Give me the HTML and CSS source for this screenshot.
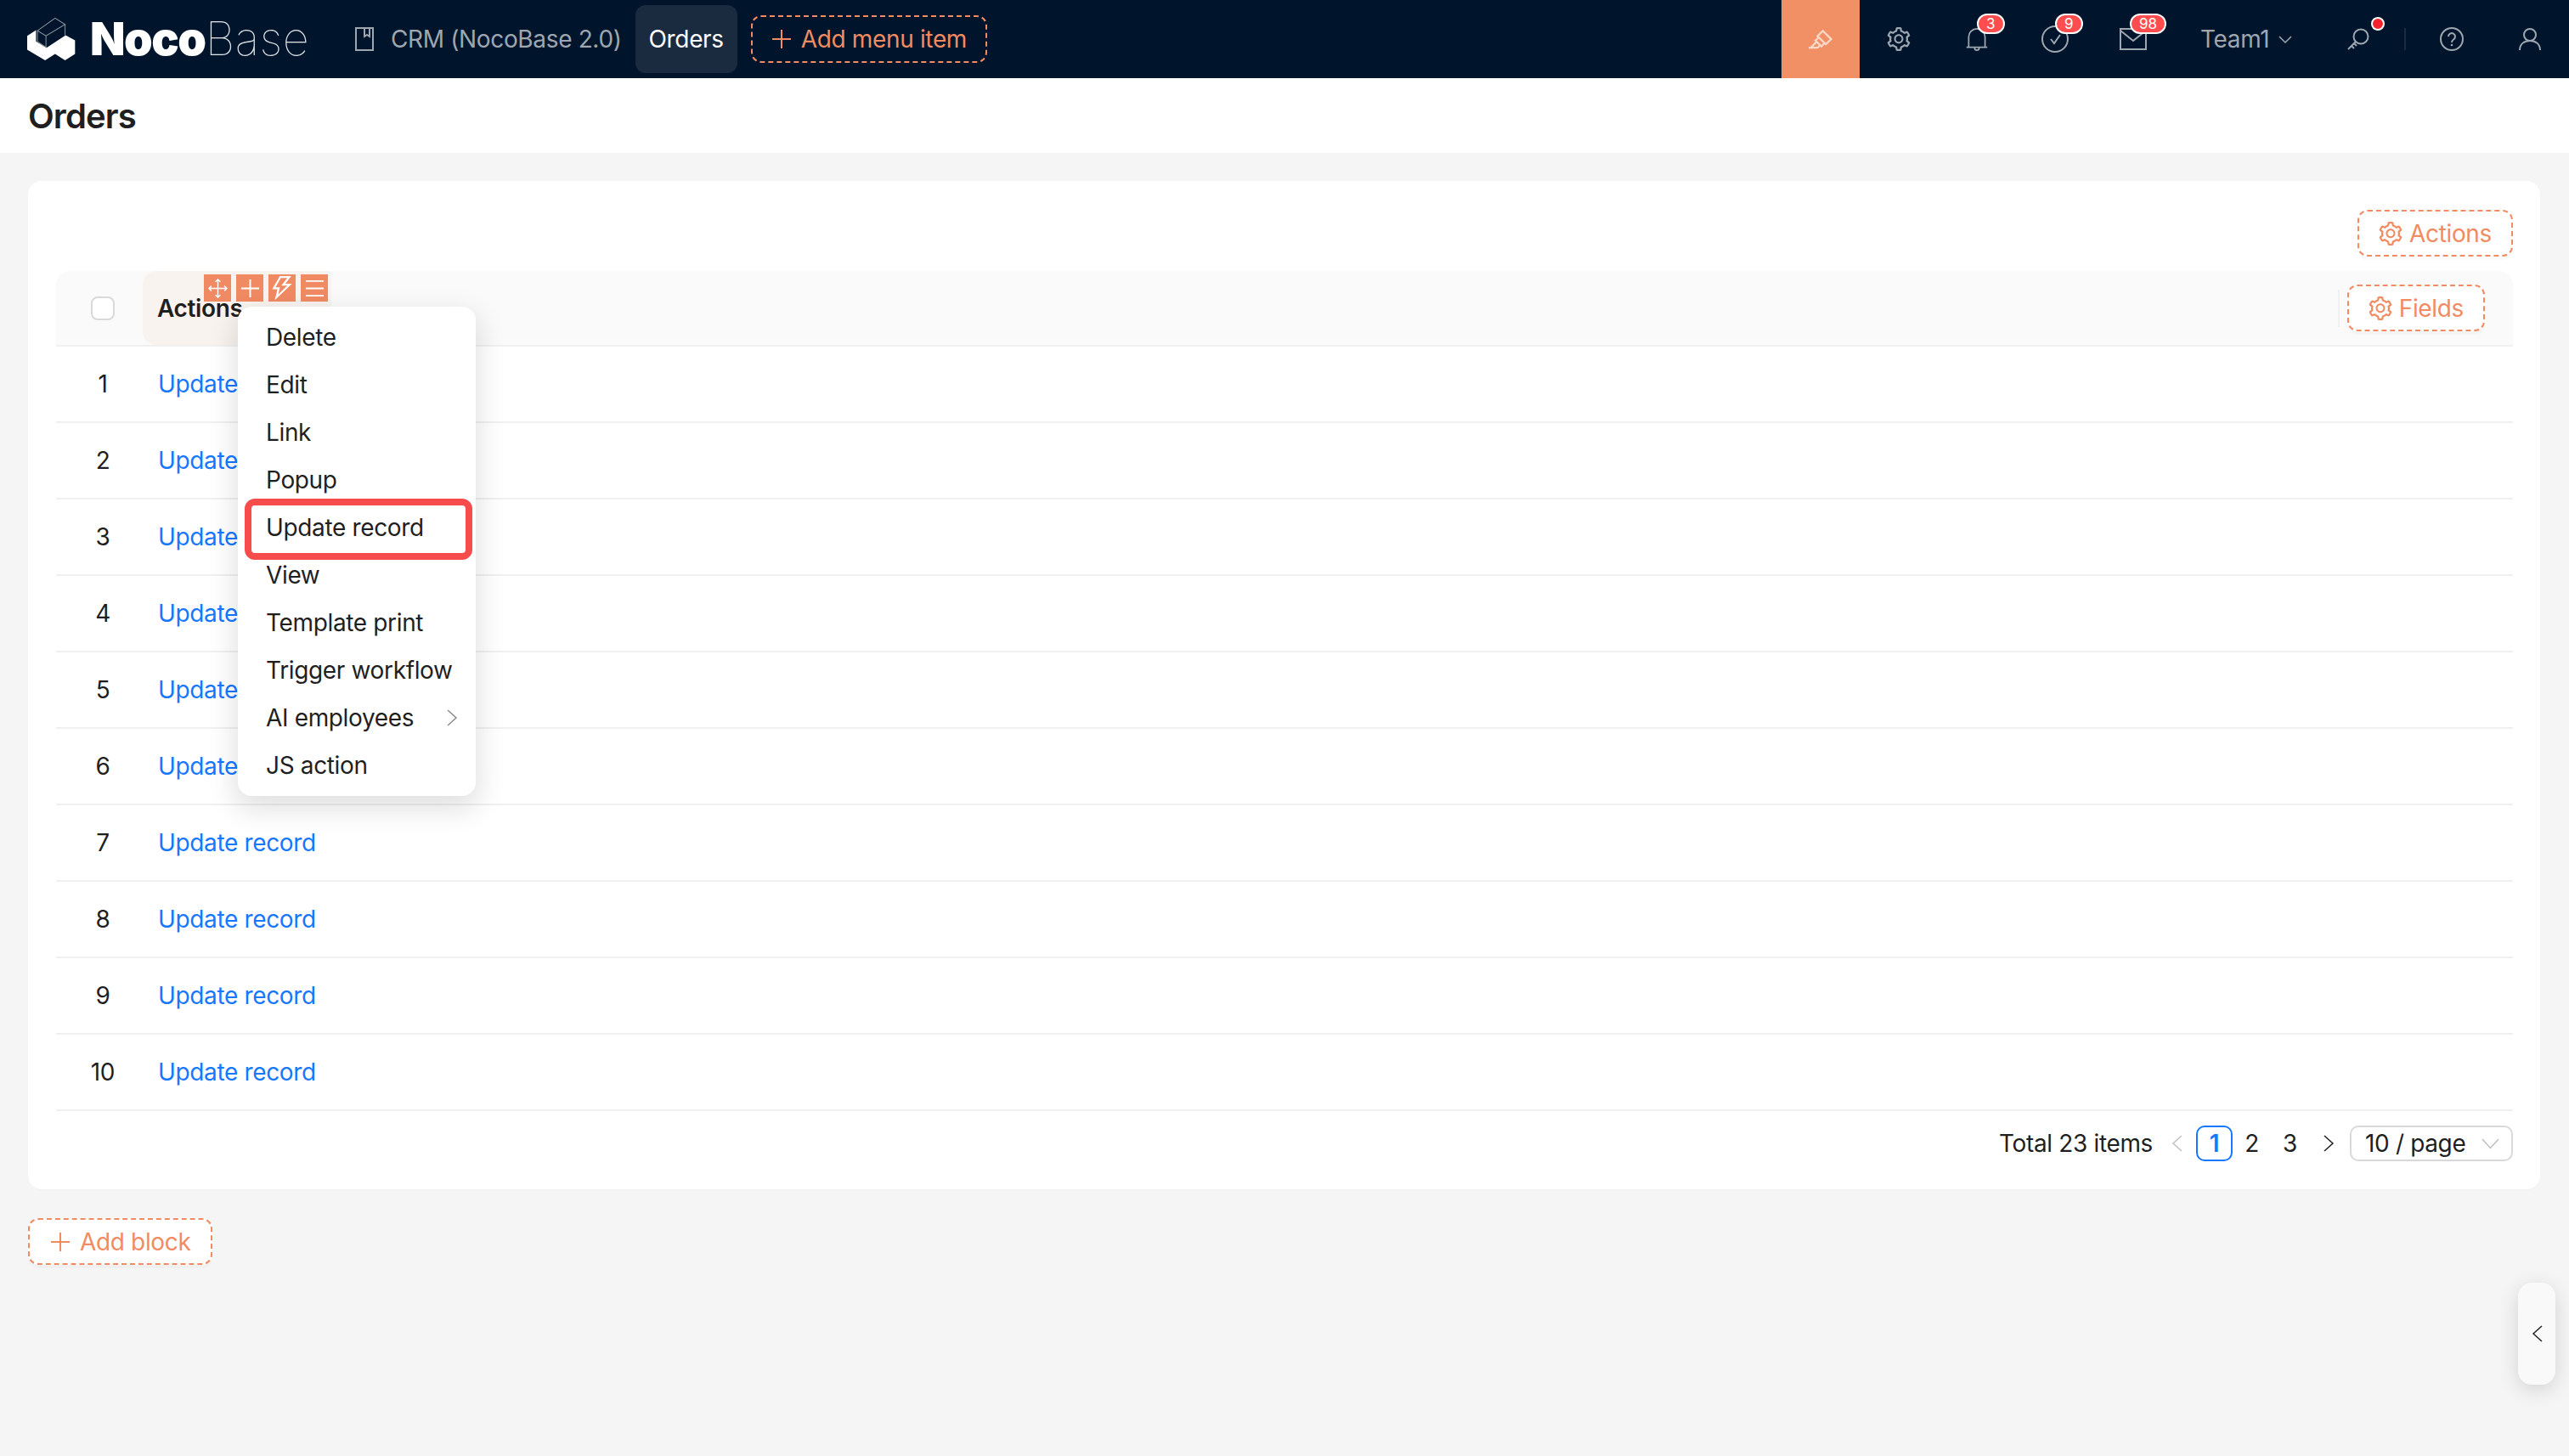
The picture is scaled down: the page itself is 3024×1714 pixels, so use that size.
FILE: index.html
```html
<!DOCTYPE html>
<html lang="en">
  <head>
    <meta charset="UTF-8" />
    <title>Orders</title>
    <link rel="stylesheet" href="styles.css">
  </head>
  <body>
    <svg class="defs" width="0" height="0">
      <symbol id="gear" viewBox="64 64 896 896">
        <path fill="currentColor" d="M924.8 625.7l-65.5-56c3.1-19 4.7-38.4 4.7-57.8s-1.6-38.8-4.7-57.8l65.5-56a32.03 32.03 0 0 0 9.3-35.2l-.9-2.6a443.74 443.74 0 0 0-79.7-137.9l-1.8-2.1a32.12 32.12 0 0 0-35.1-9.5l-81.3 28.9c-30-24.6-63.5-44-99.7-57.6l-15.7-85a32.05 32.05 0 0 0-25.8-25.7l-2.7-.5c-52.1-9.4-106.9-9.4-159 0l-2.7.5a32.05 32.05 0 0 0-25.8 25.7l-15.8 85.4a351.86 351.86 0 0 0-99 57.4l-81.9-29.1a32 32 0 0 0-35.1 9.5l-1.8 2.1a446.02 446.02 0 0 0-79.7 137.9l-.9 2.6c-4.5 12.5-.8 26.5 9.3 35.2l66.3 56.6c-3.1 18.8-4.6 38-4.6 57.1 0 19.2 1.5 38.4 4.6 57.1L99 625.5a32.03 32.03 0 0 0-9.3 35.2l.9 2.6c18.1 50.4 44.9 96.9 79.7 137.9l1.8 2.1a32.12 32.12 0 0 0 35.1 9.5l81.9-29.1c29.8 24.5 63.1 43.9 99 57.4l15.8 85.4a32.05 32.05 0 0 0 25.8 25.7l2.7.5a449.4 449.4 0 0 0 159 0l2.7-.5a32.05 32.05 0 0 0 25.8-25.7l15.7-85a350 350 0 0 0 99.7-57.6l81.3 28.9a32 32 0 0 0 35.1-9.5l1.8-2.1c34.8-41.1 61.6-87.5 79.7-137.9l.9-2.6c4.5-12.3.8-26.3-9.3-35zM788.3 465.9c2.5 15.1 3.8 30.6 3.8 46.1s-1.3 31-3.8 46.1l-6.6 40.1 74.7 63.9a370.03 370.03 0 0 1-42.6 73.6L721 702.8l-31.4 25.8c-23.9 19.6-50.5 35-79.3 45.8l-38.1 14.3-17.9 97a377.5 377.5 0 0 1-85 0l-17.9-97.2-37.8-14.5c-28.5-10.8-55-26.2-78.7-45.7l-31.4-25.9-93.4 33.2c-17-22.9-31.2-47.6-42.6-73.6l75.5-64.5-6.5-40c-2.4-14.9-3.7-30.3-3.7-45.5 0-15.3 1.2-30.6 3.7-45.5l6.5-40-75.5-64.5c11.3-26.1 25.6-50.7 42.6-73.6l93.4 33.2 31.4-25.9c23.7-19.5 50.2-34.9 78.7-45.7l37.9-14.3 17.9-97.2c28.1-3.2 56.8-3.2 85 0l17.9 97 38.1 14.3c28.7 10.8 55.4 26.2 79.3 45.8l31.4 25.8 92.8-32.9c17 22.9 31.2 47.6 42.6 73.6L781.8 426l6.5 39.9zM512 326c-97.2 0-176 78.8-176 176s78.8 176 176 176 176-78.8 176-176-78.8-176-176-176zm79.2 255.2A111.6 111.6 0 0 1 512 614c-29.9 0-58-11.7-79.2-32.8A111.6 111.6 0 0 1 400 502c0-29.9 11.7-58 32.8-79.2C454 401.6 482.1 390 512 390c29.9 0 58 11.6 79.2 32.8A111.6 111.6 0 0 1 624 502c0 29.9-11.7 58-32.8 79.2z"/>
      </symbol>
      <symbol id="plus" viewBox="0 0 24 24">
        <path fill="none" stroke="currentColor" stroke-width="2" d="M12 1v22M1 12h22"/>
      </symbol>
    </svg>

    <div class="topbar">
      <div class="logo">
        <svg class="logo-mark" viewBox="97 60 170 155">
          <path fill="#fff" d="M128 106L97 126V175L160 212L195 190L230 212L265 190V142L232 124L165 168L128 146Z"/>
          <path fill="none" stroke="#8b95a1" stroke-width="3" d="M133 108L195 64L230 86L163 126ZM133 108V146L163 166V126M230 86V124"/>
        </svg>
        <span class="logo-bold">Noco</span><span class="logo-thin">Base</span>
      </div>
      <div class="menu">
        <a class="menu-item">
          <svg class="book-icon" viewBox="0 0 22 28"><path fill="none" stroke="currentColor" stroke-width="2" d="M1 1h20v26H1zM11 1v10l3-2 3 2V1"/></svg>
          CRM (NocoBase 2.0)
        </a>
        <a class="menu-item active">Orders</a>
        <a class="add-menu"><svg class="plus-icon"><use href="#plus"/></svg>Add menu item</a>
      </div>
      <div class="right-menu">
        <div class="icon-btn ui-editor">
          <svg class="icon-28" viewBox="64 64 896 896"><path fill="currentColor" d="M957.6 507.4L603.2 158.2a7.9 7.9 0 0 0-11.2 0L353.3 393.4a8.03 8.03 0 0 0-.1 11.3l.1.1 40 39.4-117.2 115.3a8.03 8.03 0 0 0-.1 11.3l.1.1 39.5 38.9-189.1 187H72.1c-4.4 0-8.1 3.6-8.1 8V860c0 4.4 3.6 8 8 8h344.9c2.1 0 4.1-.8 5.6-2.3l76.1-75.6 40.4 39.8a7.9 7.9 0 0 0 11.2 0l117.1-115.6 40.1 39.5a7.9 7.9 0 0 0 11.2 0l238.7-235.2c3.4-3 3.4-8 .3-11.2zM389.8 796.2H229.6l134.4-133 80.1 78.9-54.3 54.1zm154.8-62.1L373.2 565.2l68.6-67.6 171.4 168.9-68.6 67.6zM713.1 658L450.3 399.1 597.6 254l262.8 259-147.3 145z"/></svg>
        </div>
        <div class="icon-btn"><svg class="icon-28"><use href="#gear"/></svg></div>
        <div class="icon-btn">
          <svg class="icon-28" viewBox="0 0 28 32"><path fill="none" stroke="currentColor" stroke-width="2" d="M3 26V13a11 11 0 0 1 22 0v13M0 27h28M11 28a3 3 0 0 0 6 0"/></svg>
          <span class="badge badge-bell">3</span>
        </div>
        <div class="icon-btn">
          <svg class="icon-32" viewBox="0 0 32 32"><circle cx="16" cy="16" r="15" fill="none" stroke="currentColor" stroke-width="2"/><path fill="none" stroke="currentColor" stroke-width="2" d="M11 16l4 5 7-10"/></svg>
          <span class="badge badge-check">9</span>
        </div>
        <div class="icon-btn">
          <svg class="icon-32" viewBox="0 0 32 26"><path fill="none" stroke="currentColor" stroke-width="2" d="M1 1h30v24H1zM1 3l15 12L31 3"/></svg>
          <span class="badge badge-mail">98</span>
        </div>
        <div class="team">Team1 <svg class="chevron-down" viewBox="0 0 16 9"><path fill="none" stroke="currentColor" stroke-width="1.5" d="M1 1l7 7 7-7"/></svg></div>
        <div class="icon-btn">
          <svg class="icon-26" viewBox="0 0 26 26"><circle cx="16" cy="10" r="8.5" fill="none" stroke="currentColor" stroke-width="2"/><path fill="none" stroke="currentColor" stroke-width="2" d="M10 16L1 25M5 21l3 3M8 18l3 3"/></svg>
          <span class="dot"></span>
        </div>
        <div class="divider"></div>
        <div class="icon-btn">
          <svg class="icon-28" viewBox="0 0 28 28"><circle cx="14" cy="14" r="13" fill="none" stroke="currentColor" stroke-width="2"/><path fill="none" stroke="currentColor" stroke-width="2" d="M10 11a4 4 0 1 1 6 3.5c-1.5 1-2 1.500-2 3.500"/><circle cx="14" cy="21" r="1.300" fill="currentColor"/></svg>
        </div>
        <div class="icon-btn">
          <svg class="icon-26" viewBox="0 0 26 26"><circle cx="13" cy="8" r="7" fill="none" stroke="currentColor" stroke-width="2"/><path fill="none" stroke="currentColor" stroke-width="2" d="M1 26c0-7 5-11 12-11s12 4 12 11"/></svg>
        </div>
      </div>
    </div>

    <div class="page-title">Orders</div>

    <main>
      <div class="card">
        <div class="card-actions">
          <a class="dashed-btn"><svg class="btn-gear"><use href="#gear"/></svg>Actions</a>
        </div>
        <div class="table">
          <div class="thead">
            <div class="cell-num"><span class="checkbox"></span></div>
            <div class="th-actions">
              <span class="th-label">Actions</span>
              <div class="toolbar">
                <span class="tool"><svg viewBox="0 0 24 24"><path fill="none" stroke="#fff" stroke-width="1.500" d="M12 1v22M1 12h22M9 4l3-3 3 3M9 20l3 3 3-3M4 9l-3 3 3 3M20 9l3 3-3 3"/></svg></span>
                <span class="tool"><svg viewBox="0 0 24 24"><use href="#plus"/></svg></span>
                <span class="tool"><svg class="tool-bolt" viewBox="64 64 896 896"><path fill="#fff" d="M848 359.3H627.7L825.8 109c4.1-5.3.4-13-6.300-13H436c-2.800 0-5.500 1.500-6.900 4L170 547.500c-3.100 5.300.7 12 6.900 12h174.400l-89.400 357.600c-1.900 7.800 7.500 13.300 13.300 7.700L853.500 373c5.200-4.900 1.700-13.700-5.500-13.700zM378.200 732.500l60.300-241H281.100l189.600-327.400h224.600L487 427.400h211L378.200 732.500z"/></svg></span>
                <span class="tool"><svg viewBox="0 0 24 24"><path fill="none" stroke="#fff" stroke-width="2" d="M1 3h22M1 12h22M1 21h22"/></svg></span>
              </div>
            </div>
            <div class="th-fill">
              <span class="th-sep"></span>
              <a class="dashed-btn"><svg class="btn-gear"><use href="#gear"/></svg>Fields</a>
            </div>
          </div>
          <div class="row"><div class="cell-num">1</div><a class="link">Update record</a></div>
          <div class="row"><div class="cell-num">2</div><a class="link">Update record</a></div>
          <div class="row"><div class="cell-num">3</div><a class="link">Update record</a></div>
          <div class="row"><div class="cell-num">4</div><a class="link">Update record</a></div>
          <div class="row"><div class="cell-num">5</div><a class="link">Update record</a></div>
          <div class="row"><div class="cell-num">6</div><a class="link">Update record</a></div>
          <div class="row"><div class="cell-num">7</div><a class="link">Update record</a></div>
          <div class="row"><div class="cell-num">8</div><a class="link">Update record</a></div>
          <div class="row"><div class="cell-num">9</div><a class="link">Update record</a></div>
          <div class="row"><div class="cell-num">10</div><a class="link">Update record</a></div>

          <div class="dropdown">
            <div class="drop-item">Delete</div>
            <div class="drop-item">Edit</div>
            <div class="drop-item">Link</div>
            <div class="drop-item">Popup</div>
            <div class="drop-item marked">Update record</div>
            <div class="drop-item">View</div>
            <div class="drop-item">Template print</div>
            <div class="drop-item">Trigger workflow</div>
            <div class="drop-item">AI employees <svg class="drop-arrow" viewBox="0 0 14 20"><path fill="none" stroke="#8c8c8c" stroke-width="1.500" d="M2 1l10 9-10 9"/></svg></div>
            <div class="drop-item">JS action</div>
          </div>
        </div>
        <div class="pagination">
          <span class="total">Total 23 items</span>
          <span class="pager muted"><svg viewBox="0 0 14 20"><path fill="none" stroke="currentColor" stroke-width="1.500" d="M12 1L2 10l10 9"/></svg></span>
          <span class="pager current">1</span>
          <span class="pager">2</span>
          <span class="pager">3</span>
          <span class="pager"><svg viewBox="0 0 14 20"><path fill="none" stroke="currentColor" stroke-width="1.500" d="M2 1l10 9-10 9"/></svg></span>
          <span class="page-size">10 / page <svg class="size-chevron" viewBox="0 0 21 13"><path fill="none" stroke="currentColor" stroke-width="1.500" d="M1 1l9.500 10.500L20 1"/></svg></span>
        </div>
      </div>
      <a class="dashed-btn add-block"><svg class="plus-icon"><use href="#plus"/></svg>Add block</a>
    </main>

    <div class="side-tab"><svg viewBox="0 0 13 20"><path fill="none" stroke="#222" stroke-width="1.500" d="M12 1L2 10l10 9"/></svg></div>
  </body>
</html>
```

FILE: styles.css
```css
body {
  margin: 0;
  height: 1714px;
  overflow: hidden;
  position: relative;
  background-color: #f5f5f5;
  font-family: Inter, "Liberation Sans", sans-serif;
  font-size: 28px;
  letter-spacing: -0.35px;
  color: #1f1f1f;
}

.defs {
  position: absolute;
}

.topbar {
  display: flex;
  align-items: center;
  height: 92px;
  padding-left: 32px;
  background-color: #00152b;
}

.logo {
  display: flex;
  align-items: center;
  width: 338px;
  color: #fff;
  font-size: 54px;
  line-height: 92px;
}

.logo-mark {
  width: 57px;
  height: 52px;
  margin-right: 17px;
}

.logo-bold {
  font-weight: 900;
  letter-spacing: -1.5px;
}

.logo-thin {
  font-weight: 100;
  letter-spacing: 0.5px;
  color: #dfe3e7;
}

.menu {
  display: flex;
  align-items: center;
  margin-left: 32px;
  color: #9ea6b0;
}

.menu-item {
  display: flex;
  align-items: center;
  height: 80px;
  padding: 0 16px;
  border-radius: 12px;
}

.menu-item.active {
  background-color: #1a2b40;
  color: #fff;
}

.book-icon {
  width: 22px;
  height: 28px;
  margin-right: 20px;
}

.add-menu {
  display: flex;
  align-items: center;
  box-sizing: border-box;
  height: 56px;
  margin-left: 16px;
  padding: 0 22px;
  border: 2px dashed #f18b62;
  border-radius: 12px;
  color: #f18b62;
}

.plus-icon {
  width: 24px;
  height: 24px;
  margin-right: 11px;
}

.right-menu {
  display: flex;
  align-items: center;
  height: 92px;
  margin-left: auto;
  color: #9ea6b0;
}

.icon-btn {
  display: flex;
  align-items: center;
  justify-content: center;
  position: relative;
  width: 92px;
  height: 92px;
}

.ui-editor {
  background-color: #f18f65;
  color: #fbd9c9;
}

.icon-28 {
  width: 28px;
  height: 28px;
}

.icon-32 {
  width: 32px;
  height: 32px;
}

.icon-26 {
  width: 26px;
  height: 26px;
}

.badge {
  position: absolute;
  top: 16px;
  box-sizing: border-box;
  height: 24px;
  padding: 0 9px;
  border: 2px solid #fff;
  border-radius: 12px;
  background-color: #ff4d4f;
  color: #fff;
  font-size: 17px;
  line-height: 20px;
  letter-spacing: 0;
}

.badge-bell {
  left: 46px;
}

.badge-check {
  left: 46px;
}

.badge-mail {
  left: 42px;
}

.dot {
  position: absolute;
  top: 20px;
  left: 61px;
  box-sizing: border-box;
  width: 16px;
  height: 16px;
  border: 2px solid #fff;
  border-radius: 50%;
  background-color: #f5222d;
}

.team {
  display: flex;
  align-items: center;
  gap: 11px;
  width: 140px;
  padding-left: 33px;
}

.chevron-down {
  width: 16px;
  height: 9px;
}

.divider {
  width: 2px;
  height: 26px;
  margin: 0 8px;
  background-color: #1a2b40;
}

.page-title {
  display: flex;
  align-items: center;
  height: 88px;
  padding-left: 33px;
  background-color: #fff;
  font-size: 40px;
  font-weight: 600;
  letter-spacing: -0.9px;
}

main {
  padding: 33px 34px 33px 33px;
}

.card {
  box-sizing: border-box;
  height: 1187px;
  padding: 34px 32px 0 33px;
  background-color: #fff;
  border-radius: 16px;
  box-shadow: 0 1px 2px rgba(0, 0, 0, 0.02);
}

.card-actions {
  display: flex;
  justify-content: flex-end;
  margin-bottom: 17px;
}

.dashed-btn {
  display: flex;
  align-items: center;
  box-sizing: border-box;
  height: 55px;
  padding: 0 23px;
  border: 2px dashed #f18b62;
  border-radius: 12px;
  background-color: #fff;
  color: #f18b62;
  box-shadow: 0 4px 0 rgba(0, 0, 0, 0.02);
}

.btn-gear {
  width: 28px;
  height: 28px;
  margin-right: 8px;
}

.table {
  position: relative;
}

.thead {
  display: flex;
  align-items: center;
  box-sizing: border-box;
  height: 89px;
  border-bottom: 2px solid #f0f0f0;
  border-radius: 16px 16px 0 0;
  background-color: #fafafa;
}

.cell-num {
  display: flex;
  align-items: center;
  justify-content: center;
  box-sizing: border-box;
  width: 102px;
  padding-left: 8px;
}

.checkbox {
  box-sizing: border-box;
  width: 28px;
  height: 28px;
  border: 2px solid #d9d9d9;
  border-radius: 8px;
  background-color: #fff;
}

.th-actions {
  display: flex;
  align-items: center;
  position: relative;
  box-sizing: border-box;
  width: 222px;
  height: 87px;
  padding-left: 17px;
  border-radius: 16px 0 0 16px;
  background-color: #f9f3f0;
  font-weight: 600;
}

.toolbar {
  display: flex;
  gap: 6px;
  position: absolute;
  top: 4px;
  left: 72px;
}

.tool {
  display: flex;
  align-items: center;
  justify-content: center;
  width: 32px;
  height: 32px;
  background-color: #f08a63;
  color: #fff;
}

.tool svg {
  width: 23px;
  height: 23px;
}

.tool .tool-bolt {
  width: 30px;
  height: 30px;
}

.th-fill {
  display: flex;
  align-items: center;
  justify-content: flex-end;
  flex: 1;
  padding-right: 33px;
}

.th-sep {
  width: 2px;
  height: 44px;
  margin-right: 9px;
  background-color: #f0f0f0;
}

.row {
  display: flex;
  align-items: center;
  box-sizing: border-box;
  height: 90px;
  border-bottom: 2px solid #f0f0f0;
}

.link {
  margin-left: 18px;
  color: #1677ff;
}

.dropdown {
  position: absolute;
  top: 42px;
  left: 214px;
  box-sizing: border-box;
  width: 280px;
  padding: 8px;
  border-radius: 16px;
  background-color: #fff;
  box-shadow: 0 12px 32px 4px rgba(0, 0, 0, 0.12);
}

.drop-item {
  display: flex;
  align-items: center;
  position: relative;
  height: 56px;
  padding-left: 25px;
}

.drop-arrow {
  position: absolute;
  top: 18px;
  right: 13px;
  width: 14px;
  height: 20px;
}

/* red marker drawn over the menu */
.marked::after {
  content: "";
  position: absolute;
  top: -6px;
  right: -4px;
  bottom: -10px;
  left: 0;
  border: 8px solid #f64c4c;
  border-radius: 12px;
}

.pagination {
  display: flex;
  align-items: center;
  justify-content: flex-end;
  margin-top: 17px;
}

.total {
  margin-right: 6px;
}

.pager {
  display: flex;
  align-items: center;
  justify-content: center;
  box-sizing: border-box;
  width: 45px;
  height: 42px;
}

.pager svg {
  width: 14px;
  height: 20px;
}

.pager.muted,
.size-chevron {
  color: #bfbfbf;
}

.pager.current {
  width: 43px;
  border: 2px solid #1677ff;
  border-radius: 10px;
  color: #1677ff;
  font-weight: 600;
}

.page-size {
  display: flex;
  align-items: center;
  justify-content: space-between;
  box-sizing: border-box;
  width: 192px;
  height: 42px;
  margin-left: 3px;
  padding: 0 14px 0 16px;
  border: 2px solid #d9d9d9;
  border-radius: 10px;
}

.size-chevron {
  width: 21px;
  height: 13px;
}

.add-block {
  display: inline-flex;
  margin-top: 34px;
  padding: 0 24px;
}

.side-tab {
  display: flex;
  align-items: center;
  justify-content: center;
  position: absolute;
  top: 1510px;
  left: 2964px;
  width: 44px;
  height: 120px;
  border-radius: 16px;
  background-color: #f9f9f9;
  box-shadow: 0 6px 24px rgba(0, 0, 0, 0.14);
}

.side-tab svg {
  width: 13px;
  height: 20px;
}
```
